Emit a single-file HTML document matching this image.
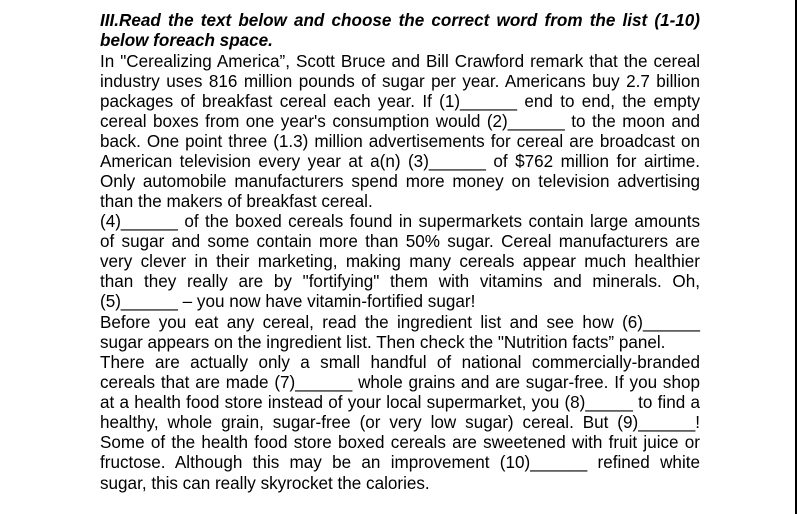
<!DOCTYPE html>
<html><head><meta charset="utf-8"><style>
html,body{margin:0;padding:0;background:#fff;width:797px;height:514px;overflow:hidden;position:relative}
.l{position:absolute;left:100px;width:600px;font-family:"Liberation Sans",sans-serif;font-size:17.1px;line-height:20px;color:#000;white-space:nowrap;text-align:justify;text-align-last:justify}
.n{text-align-last:left}
.b{font-weight:bold;font-style:italic}
.vr{position:absolute;left:795px;top:0;width:2px;height:514px;background:#000}
</style></head><body>
<div class="vr"></div>
<div class="l b" style="top:11px">III.Read the text below and choose the correct word from the list (1-10)</div>
<div class="l b n" style="top:31px">below foreach space.</div>
<div class="l" style="top:52px">In "Cerealizing America”, Scott Bruce and Bill Crawford remark that the cereal</div>
<div class="l" style="top:72px">industry uses 816 million pounds of sugar per year. Americans buy 2.7 billion</div>
<div class="l" style="top:92px">packages of breakfast cereal each year. If (1)______ end to end, the empty</div>
<div class="l" style="top:112px">cereal boxes from one year's consumption would (2)______ to the moon and</div>
<div class="l" style="top:132px">back. One point three (1.3) million advertisements for cereal are broadcast on</div>
<div class="l" style="top:152px">American television every year at a(n) (3)______ of $762 million for airtime.</div>
<div class="l" style="top:172px">Only automobile manufacturers spend more money on television advertising</div>
<div class="l n" style="top:192px">than the makers of breakfast cereal.</div>
<div class="l" style="top:212px">(4)______ of the boxed cereals found in supermarkets contain large amounts</div>
<div class="l" style="top:232px">of sugar and some contain more than 50% sugar. Cereal manufacturers are</div>
<div class="l" style="top:252px">very clever in their marketing, making many cereals appear much healthier</div>
<div class="l" style="top:272px">than they really are by "fortifying" them with vitamins and minerals. Oh,</div>
<div class="l n" style="top:292px">(5)______ – you now have vitamin-fortified sugar!</div>
<div class="l" style="top:313px">Before you eat any cereal, read the ingredient list and see how (6)______</div>
<div class="l n" style="top:333px">sugar appears on the ingredient list. Then check the "Nutrition facts” panel.</div>
<div class="l" style="top:353px">There are actually only a small handful of national commercially-branded</div>
<div class="l" style="top:373px">cereals that are made (7)______ whole grains and are sugar-free. If you shop</div>
<div class="l" style="top:393px">at a health food store instead of your local supermarket, you (8)_____ to find a</div>
<div class="l" style="top:413px">healthy, whole grain, sugar-free (or very low sugar) cereal. But (9)______!</div>
<div class="l" style="top:433px">Some of the health food store boxed cereals are sweetened with fruit juice or</div>
<div class="l" style="top:453px">fructose. Although this may be an improvement (10)______ refined white</div>
<div class="l n" style="top:474px">sugar, this can really skyrocket the calories.</div>
</body></html>
